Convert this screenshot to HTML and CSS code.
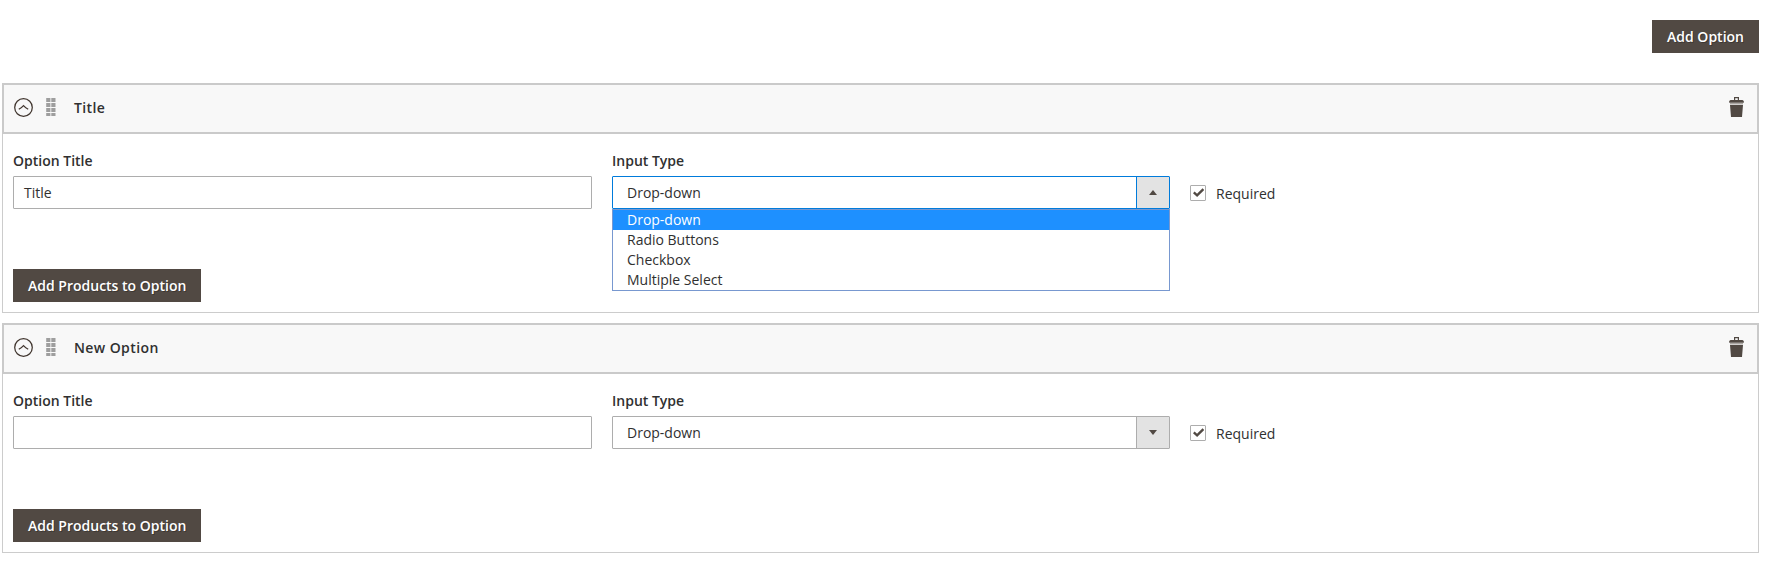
FILE: index.html
```html
<!DOCTYPE html>
<html lang="en">
<head>
<meta charset="utf-8">
<title>Bundle Options</title>
<link rel="stylesheet" href="styles.css">
</head>
<body>
<svg class="sprite" aria-hidden="true">
  <symbol id="collapse" viewBox="0 0 19 19"><circle cx="9.5" cy="9.5" r="8.8" fill="none" stroke="currentColor" stroke-width="1.25"/><path d="M4.8 11.3Q7.5 9.8 9.5 7.6Q11.5 9.8 14.2 11.3" fill="none" stroke="currentColor" stroke-width="1.3"/></symbol>
  <symbol id="grip" viewBox="0 0 10 18"><path d="M.2 0h4.2v4H.2zM5.3 0h4.2v4H5.3zM.2 5h4.2v4H.2zM5.3 5h4.2v4H5.3zM.2 10h4.2v4H.2zM5.3 10h4.2v4H5.3zM.2 15h4.2v3H.2zM5.3 15h4.2v3H5.3z" fill="currentColor"/></symbol>
  <symbol id="trash" viewBox="0 0 15 20"><path d="M5 3V0h5v3h3.5l1.3 1v1.8H.2V4l1.3-1zM6.2 3h2.6V1.2H6.2zM1 8h13l-1 12H2z" fill="currentColor"/><path d="M1 6h13v1.5H1z" fill="#aaa6a2"/></symbol>
  <symbol id="check" viewBox="0 0 11 9"><path d="M.8 4.4 4.1 7.3 10.4 1.2" fill="none" stroke="currentColor" stroke-width="2.4"/></symbol>
  <symbol id="up" viewBox="0 0 8 5"><path d="M4 0 8 5H0z" fill="currentColor"/></symbol>
  <symbol id="down" viewBox="0 0 8 5"><path d="M0 0h8L4 5z" fill="currentColor"/></symbol>
</svg>
<main class="page">
  <div class="toolbar"><button class="button">Add Option</button></div>

  <section class="panel">
    <header class="panel-header">
      <svg class="icon-collapse"><use href="#collapse"/></svg>
      <svg class="icon-grip"><use href="#grip"/></svg>
      <span class="panel-title">Title</span>
      <svg class="icon-trash"><use href="#trash"/></svg>
    </header>
    <div class="panel-body">
      <div class="fields">
        <div class="field">
          <span class="label">Option Title</span>
          <div class="input">Title</div>
        </div>
        <div class="field">
          <span class="label">Input Type</span>
          <div class="select is-open">
            <span class="select-value">Drop-down</span>
            <span class="select-toggle"><svg class="arrow"><use href="#up"/></svg></span>
            <ul class="options">
              <li class="option is-active">Drop-down</li>
              <li class="option">Radio Buttons</li>
              <li class="option">Checkbox</li>
              <li class="option">Multiple Select</li>
            </ul>
          </div>
        </div>
        <div class="required">
          <span class="checkbox"><svg class="check"><use href="#check"/></svg></span>
          <span class="required-text">Required</span>
        </div>
      </div>
      <button class="button">Add Products to Option</button>
    </div>
  </section>

  <section class="panel">
    <header class="panel-header">
      <svg class="icon-collapse"><use href="#collapse"/></svg>
      <svg class="icon-grip"><use href="#grip"/></svg>
      <span class="panel-title">New Option</span>
      <svg class="icon-trash"><use href="#trash"/></svg>
    </header>
    <div class="panel-body">
      <div class="fields">
        <div class="field">
          <span class="label">Option Title</span>
          <div class="input"></div>
        </div>
        <div class="field">
          <span class="label">Input Type</span>
          <div class="select">
            <span class="select-value">Drop-down</span>
            <span class="select-toggle"><svg class="arrow"><use href="#down"/></svg></span>
          </div>
        </div>
        <div class="required">
          <span class="checkbox"><svg class="check"><use href="#check"/></svg></span>
          <span class="required-text">Required</span>
        </div>
      </div>
      <button class="button">Add Products to Option</button>
    </div>
  </section>
</main>
</body>
</html>
```
FILE: styles.css
```css
* { box-sizing: border-box; }
body { margin: 0; background: #fff; color: #303030; font: 14px/20px "Open Sans", sans-serif; }
.sprite { position: absolute; width: 0; height: 0; }
.page { padding: 20px 13px 0 2px; }
.toolbar { display: flex; justify-content: flex-end; margin-bottom: 30px; }
.button { display: block; height: 33px; padding: 1px 15px 0; border: 0; background: #514943; color: #fff; font: 600 14px/20px "Open Sans", sans-serif; text-shadow: 1px 1px 0 rgba(0, 0, 0, .25); white-space: nowrap; }
.panel { height: 230px; margin-bottom: 10px; border: 1px solid #ccc; border-top: 0; }
.panel-header { display: flex; align-items: flex-start; height: 51px; margin: 0 -1px; padding: 13px 13px 0 9.5px; border: 2px solid #cacaca; background: #f8f8f8; }
.icon-collapse { width: 19px; height: 19px; margin-top: -.5px; color: #41362f; }
.icon-grip { width: 10px; height: 18px; margin-left: 13.5px; color: #9e9e9e; }
.panel-title { flex: 1; margin-left: 18px; font-weight: 600; letter-spacing: .4px; }
.icon-trash { width: 15px; height: 20px; margin-top: -1px; color: #514943; }
.panel-body { padding: 17px 10px 0; }
.fields { display: grid; grid-template-columns: 579px 558px auto; column-gap: 20px; justify-content: start; margin-bottom: 60px; }
.label { display: block; height: 25px; font-weight: 600; }
.input { height: 33px; padding: 6px 10px 4px; border: 1px solid #adadad; border-radius: 1px; }
.select { position: relative; display: flex; height: 33px; border: 1px solid #adadad; border-radius: 1px; }
.select-value { flex: 1; padding: 6px 14px 4px; }
.select-toggle { display: flex; align-items: center; justify-content: center; width: 33px; border-left: 1px solid #adadad; background: #e3e3e3; color: #514943; }
.arrow { width: 8px; height: 5px; }
.is-open, .is-open .select-toggle { border-color: #007bdb; }
.options { position: absolute; top: 32px; left: -1px; right: -1px; margin: 0; padding: 0; border: 1px solid #7898d0; background: #fff; list-style: none; }
.option { height: 20px; padding-left: 14px; }
.is-active { background: #1e90ff; color: #fff; }
.required { display: flex; padding-top: 34px; }
.checkbox { display: flex; align-items: center; justify-content: center; width: 16px; height: 16px; border: 1px solid #adadad; border-radius: 1px; color: #514943; }
.check { width: 11px; height: 9px; margin-top: -2px; }
.required-text { margin: -1px 0 0 10px; }
```
